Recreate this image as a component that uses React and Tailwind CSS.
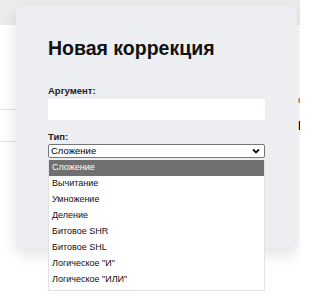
const options = [
  "Сложение",
  "Вычитание",
  "Умножение",
  "Деление",
  "Битовое SHR",
  "Битовое SHL",
  'Логическое "И"',
  'Логическое "ИЛИ"',
]

function App() {
  return (
    <div className="relative w-[300px] h-[300px] overflow-hidden bg-white font-['Liberation_Sans',Arial,sans-serif] text-black">
      {/* page behind the modal */}
      <div className="h-[25px] bg-[#ececed]" />
      <div className="flex">
        <div className="w-[298px] shrink-0">
          <div className="h-[85px] border-b border-[#e4e4e4]" />
          <div className="h-[32px] border-b border-[#e4e4e4]" />
        </div>
        <div className="flex flex-col pt-[71px]">
          <span className="text-[8px] leading-[10px] text-[#333]">Н</span>
          <span className="mt-[13px] text-[13px] leading-[14px] font-bold">Б</span>
        </div>
      </div>

      {/* modal */}
      <div className="absolute left-[16px] top-[6px] w-[281px] h-[242px] rounded-[8px] bg-[#eceef1] shadow-[0_6px_16px_rgba(0,0,0,0.12)] pt-[31px] px-[32px]">
        <h2 className="text-[19.5px] leading-[22px] font-bold text-[#111]">Новая коррекция</h2>
        <div className="mt-[26px] text-[9.5px] leading-[12px] font-bold text-[#222]">Аргумент:</div>
        <div className="mt-[2px] h-[21px] w-[217px] bg-white" />
        <div className="mt-[11px] text-[9.5px] leading-[12px] font-bold text-[#222]">Тип:</div>
        <div className="mt-[1px] h-[14px] w-[217px] bg-white border border-[#767676] rounded-[2px] flex items-center justify-between pl-[2px] pr-[4px]">
          <span className="text-[9.5px] leading-[12px]">Сложение</span>
          <svg width="8" height="6" viewBox="0 0 8 6">
            <path d="M1 1.5 L4 4.5 L7 1.5" fill="none" stroke="#111" strokeWidth="1.8" />
          </svg>
        </div>
      </div>

      {/* open select list */}
      <div className="absolute left-[48px] top-[160px] w-[217px] bg-white border-x border-b border-[#e2e2e2] pb-[2px]">
        {options.map((o, i) => (
          <div
            key={o}
            className={
              i === 0
                ? "h-[16px] flex items-center px-[3px] text-[9px] bg-[#707070] text-white"
                : "h-[16px] flex items-center px-[3px] text-[9px] text-[#111]"
            }
          >
            {o}
          </div>
        ))}
      </div>
    </div>
  )
}

export default App
